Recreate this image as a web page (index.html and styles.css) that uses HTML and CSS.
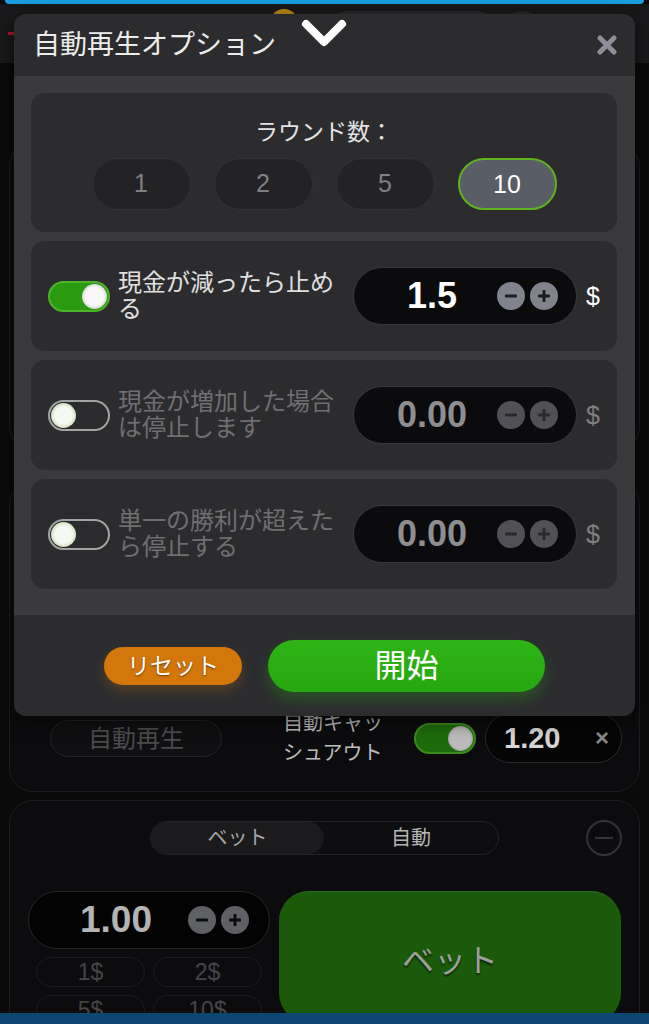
FILE: index.html
```html
<!doctype html>
<html lang="ja">
<head>
	<meta charset="UTF-8">
	<title>自動再生オプション</title>
	<link rel="stylesheet" href="styles.css">
</head>
<body>
<div class="app">
	<div class="topbar"></div>
	<div class="head">
		<span class="head-mark"></span>
		<span class="coin"></span>
		<span class="head-pill"></span>
		<span class="head-pill small"></span>
	</div>

	<div class="game"></div>

	<div class="panel panel-auto">
		<div class="auto-row">
			<div class="auto-btn">自動再生</div>
			<div class="cashout-label">自動キャッ<br>シュアウト</div>
			<div class="switch switch-dim"><span class="knob"></span></div>
			<div class="cashout-input">
				<span class="cashout-val">1.20</span>
				<span class="cashout-x">×</span>
			</div>
		</div>
	</div>

	<div class="panel panel-bet">
		<div class="tab-row">
			<div class="tabs">
				<span class="tab active">ベット</span>
				<span class="tab">自動</span>
			</div>
			<span class="round-minus"></span>
		</div>
		<div class="bet-row">
			<div class="bet-left">
				<div class="amount">
					<span class="amount-val">1.00</span>
					<span class="step dark"><svg viewBox="0 0 28 28"><rect x="8" y="12.5" width="12" height="3" rx="1"/></svg></span>
					<span class="step dark"><svg viewBox="0 0 28 28"><rect x="8" y="12.5" width="12" height="3" rx="1"/><rect x="12.5" y="8" width="3" height="12" rx="1"/></svg></span>
				</div>
				<div class="quick">
					<span>1$</span>
					<span>2$</span>
					<span>5$</span>
					<span>10$</span>
				</div>
			</div>
			<div class="bet-btn">ベット</div>
		</div>
	</div>

	<div class="bottombar"></div>
</div>

<div class="modal">
	<div class="modal-head">
		<span class="modal-title">自動再生オプション</span>
		<svg class="close" viewBox="0 0 20 20"><path d="M3 3 L17 17 M17 3 L3 17"/></svg>
	</div>
	<svg class="chevron" viewBox="0 0 46 30"><polyline points="5,6 23,24 41,6"/></svg>

	<div class="modal-body">
		<div class="card rounds">
			<div class="rounds-title">ラウンド数：</div>
			<div class="rounds-list">
				<span class="round">1</span>
				<span class="round">2</span>
				<span class="round">5</span>
				<span class="round active">10</span>
			</div>
		</div>

		<div class="card option">
			<div class="switch on"><span class="knob"></span></div>
			<div class="option-label">現金が減ったら止める</div>
			<div class="value">
				<span class="value-num">1.5</span>
				<span class="step"><svg viewBox="0 0 28 28"><rect x="8" y="12.5" width="12" height="3" rx="1"/></svg></span>
				<span class="step"><svg viewBox="0 0 28 28"><rect x="8" y="12.5" width="12" height="3" rx="1"/><rect x="12.5" y="8" width="3" height="12" rx="1"/></svg></span>
			</div>
			<span class="dollar">$</span>
		</div>

		<div class="card option off">
			<div class="switch"><span class="knob"></span></div>
			<div class="option-label">現金が増加した場合は停止します</div>
			<div class="value">
				<span class="value-num">0.00</span>
				<span class="step"><svg viewBox="0 0 28 28"><rect x="8" y="12.5" width="12" height="3" rx="1"/></svg></span>
				<span class="step"><svg viewBox="0 0 28 28"><rect x="8" y="12.5" width="12" height="3" rx="1"/><rect x="12.5" y="8" width="3" height="12" rx="1"/></svg></span>
			</div>
			<span class="dollar">$</span>
		</div>

		<div class="card option off">
			<div class="switch"><span class="knob"></span></div>
			<div class="option-label">単一の勝利が超えたら停止する</div>
			<div class="value">
				<span class="value-num">0.00</span>
				<span class="step"><svg viewBox="0 0 28 28"><rect x="8" y="12.5" width="12" height="3" rx="1"/></svg></span>
				<span class="step"><svg viewBox="0 0 28 28"><rect x="8" y="12.5" width="12" height="3" rx="1"/><rect x="12.5" y="8" width="3" height="12" rx="1"/></svg></span>
			</div>
			<span class="dollar">$</span>
		</div>
	</div>

	<div class="modal-foot">
		<span class="btn-reset">リセット</span>
		<span class="btn-start">開始</span>
	</div>
</div>
</body>
</html>
```

FILE: styles.css
```css
*{margin:0;padding:0;box-sizing:border-box;}
body{background:#0a0a0b;font-family:"Liberation Sans","Noto Sans CJK JP",sans-serif;width:649px;height:1024px;overflow:hidden;position:relative;}

/* game screen behind the dialog */
.app{width:649px;height:1024px;position:relative;overflow:hidden;background:#0a0a0b;}
.topbar{height:4px;margin:0 5px;background:#1b9fe2;border-radius:0 0 6px 6px;}
.head{height:59px;background:#19191b;display:flex;align-items:flex-start;padding:0 8px;}
.head-mark{width:7px;height:3px;background:#b8162a;margin-top:28px;}
.coin{width:28px;height:28px;border-radius:50%;background:#c58c10;margin:5px 0 0 255px;}
.head-pill{width:170px;height:40px;border-radius:20px;background:#2a2a2d;margin:7px 0 0 29px;}
.head-pill.small{width:34px;margin-left:8px;}

.game{height:307px;margin:80px 9px 0;border:1px solid #1e1e21;border-radius:24px;background:#0c0c0e;}

.panel{margin:0 9px;border:1px solid #1d1d20;border-radius:24px;background:#0c0c0e;}
.panel-auto{margin-top:30px;height:312px;display:flex;flex-direction:column;justify-content:flex-end;padding:0 16px 23px 40px;}
.auto-row{display:flex;align-items:center;}
.auto-btn{width:172px;height:37px;border:1px solid #252528;border-radius:19px;background:#101012;color:#4b4b4e;font-size:24px;line-height:35px;text-align:center;}
.cashout-label{width:100px;margin-left:61px;color:#bcbcbc;font-size:20px;line-height:30px;white-space:nowrap;}
.cashout-input{width:137px;height:50px;margin-left:9px;border:1px solid #2b2b2e;border-radius:25px;background:#050506;display:flex;align-items:center;padding:0 12px 0 18px;}
.cashout-val{color:#d6d6d6;font-size:29px;font-weight:bold;}
.cashout-x{margin-left:auto;color:#8a8a8a;font-size:24px;font-weight:bold;}

.panel-bet{margin-top:8px;height:260px;padding:19px 18px 0 18px;}
.tab-row{display:grid;grid-template-columns:1fr auto 1fr;align-items:center;}
.tabs{grid-column:2;width:349px;height:34px;border:1px solid #232326;border-radius:17px;background:#0e0e10;display:flex;}
.tab{flex:1;text-align:center;color:#b5b5b5;font-size:20px;line-height:32px;}
.tab.active{flex:0 0 173px;background:#1b1b1d;border-radius:17px;color:#a5a5a5;}
.round-minus{grid-column:3;justify-self:end;margin-right:-1px;width:36px;height:36px;border:2px solid #333336;border-radius:50%;display:flex;align-items:center;justify-content:center;}
.round-minus::before{content:"";width:18px;height:2px;background:#333336;}

.bet-row{margin-top:35px;display:grid;grid-template-columns:242px 1fr;column-gap:9px;}
.amount{height:58px;border:1px solid #262628;border-radius:29px;background:#030303;display:flex;align-items:center;gap:5px;padding:0 20px 0 20px;}
.amount-val{flex:1;text-align:center;color:#b4b4b4;font-size:37px;font-weight:bold;}
.quick{display:grid;grid-template-columns:1fr 1fr;gap:8px;margin-top:8px;padding:0 8px;}
.quick span{height:30px;border:1px solid #1c1c1e;border-radius:15px;background:#0c0c0e;color:#454548;font-size:23px;line-height:28px;text-align:center;}
.bet-btn{height:132px;border-radius:30px;background:#1b5a0b;border-top:1px solid #2c6c17;color:#9e9e9e;font-size:32px;display:flex;align-items:center;justify-content:center;text-shadow:0 2px 2px rgba(0,0,0,.6);}

.bottombar{position:absolute;left:0;right:0;bottom:0;height:11px;background:#0c4671;}

/* switches */
.switch{flex:0 0 62px;width:62px;height:31px;border-radius:16px;border:2px solid #a3a3a3;background:#2c2c2f;position:relative;}
.switch .knob{position:absolute;top:1px;left:1px;width:25px;height:25px;border-radius:50%;background:radial-gradient(circle,#f6f8f2 48%,#d8e6c8 66%,#8fb86a 92%);}
.switch.on{background:#2a9b10;border-color:#4db32a;}
.switch.on .knob,.switch-dim .knob{left:auto;right:1px;background:radial-gradient(circle,#f8f8f8 52%,#d6d6d6 70%,#8d8d8d 95%);}
.switch-dim{margin-left:31px;background:#1d6c0b;border-color:#3b8c19;}
.switch-dim .knob{background:radial-gradient(circle,#bcbcbc 55%,#a0a0a0 75%,#6f6f6f 95%);}

/* dialog */
.modal{position:absolute;left:14px;top:14px;width:621px;border-radius:12px;overflow:hidden;box-shadow:0 4px 20px rgba(0,0,0,.6);}
.modal-head{height:62px;background:#2c2c2f;display:flex;align-items:center;justify-content:space-between;padding:0 18px 0 19px;}
.modal-title{color:#ececec;font-size:27px;line-height:30px;}
.close{width:20px;height:20px;fill:none;stroke:#8c8f97;stroke-width:5;stroke-linecap:round;}
.chevron{position:absolute;left:287px;top:4px;width:46px;height:30px;fill:none;stroke:#fff;stroke-width:8;stroke-linecap:round;stroke-linejoin:round;}

.modal-body{background:#3a3a3d;padding:17px 18px 26px 17px;display:flex;flex-direction:column;gap:9px;}
.card{background:#2c2c2f;border-radius:14px;}

.rounds{height:139px;padding-top:25px;}
.rounds-title{text-align:center;color:#e2e2e2;font-size:23px;line-height:28px;}
.rounds-list{display:flex;justify-content:center;gap:23px;margin-top:12px;}
.round{width:99px;height:52px;border:1.5px solid #333337;border-radius:26px;background:#232326;color:#7f7f85;font-size:25px;line-height:49px;text-align:center;}
.round.active{background:#595d65;border:2px solid #5db31c;color:#fff;line-height:48px;}

.option{height:110px;display:flex;align-items:center;padding:0 17px;}
.option-label{width:222px;margin-left:8px;color:#e0e0e0;font-size:24px;line-height:26px;}
.value{width:224px;height:58px;margin-left:auto;border:1px solid #3a3a3d;border-radius:29px;background:#0b0b0d;display:flex;align-items:center;gap:5px;padding:0 18px 0 18px;}
.value-num{flex:1;text-align:center;color:#fff;font-size:36px;font-weight:bold;}
.step{width:28px;height:28px;border-radius:50%;background:#80838c;flex:0 0 28px;}
.step svg{display:block;width:28px;height:28px;fill:#1d1d20;}
.step.dark{background:#5f6064;}
.step.dark svg{fill:#0a0a0a;}
.dollar{margin-left:9px;width:14px;color:#fff;font-size:25px;}
.option.off .option-label{color:#6f6f72;}
.option.off .value-num{color:#8e8e90;}
.option.off .step{background:#505156;}
.option.off .step svg{fill:#2a2a2d;}
.option.off .dollar{color:#808083;}

.modal-foot{height:101px;background:#2c2c2f;display:flex;align-items:center;justify-content:center;gap:26px;}
.btn-reset{width:138px;height:38px;border-radius:19px;background:#d3770b;color:#fff;font-size:23px;line-height:38px;text-align:center;text-shadow:0 1px 2px rgba(0,0,0,.55);box-shadow:0 6px 12px rgba(210,118,11,.25);}
.btn-start{width:277px;height:52px;border-radius:26px;background:linear-gradient(#2eb416,#27a711);color:#fff;font-size:32px;line-height:52px;text-align:center;box-shadow:0 8px 14px rgba(41,173,18,.3);}
```
